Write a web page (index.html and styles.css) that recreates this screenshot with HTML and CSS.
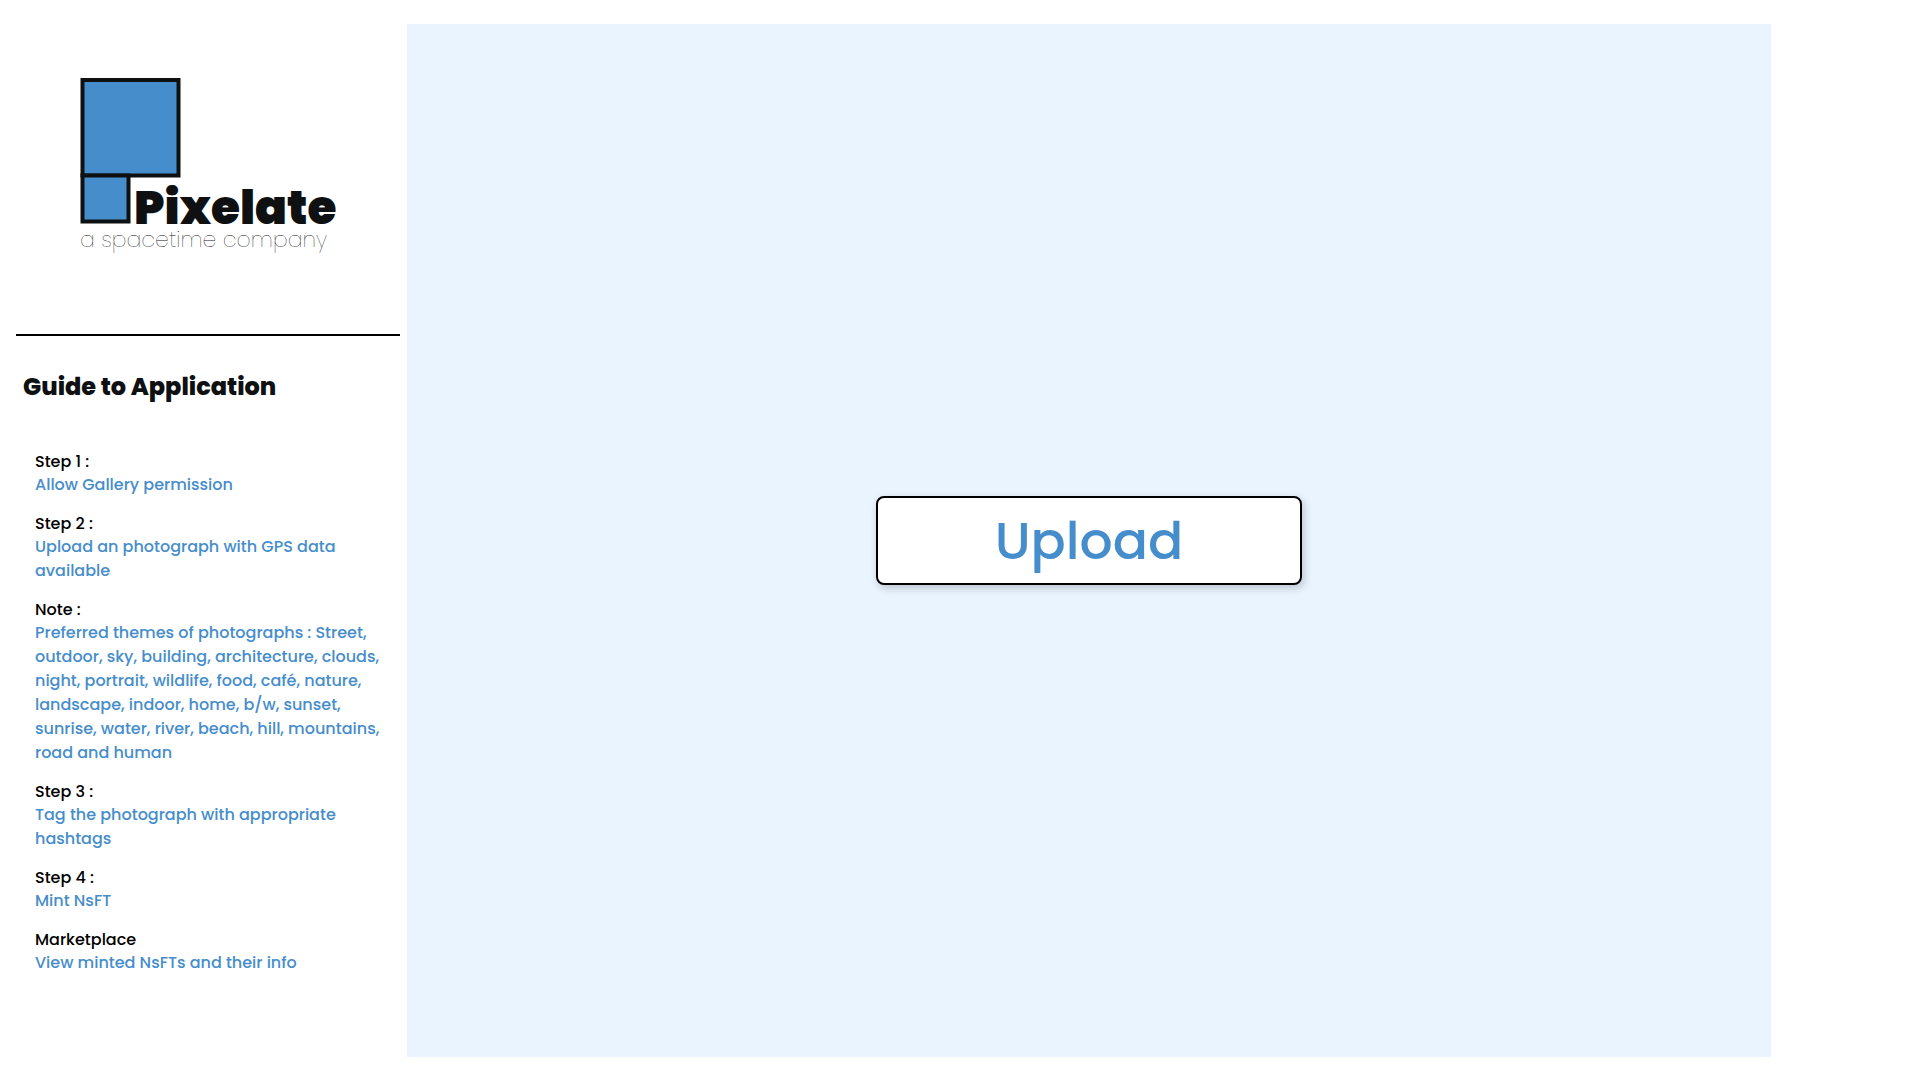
FILE: index.html
```
<!DOCTYPE html>
<html lang="en">
<head>
<meta charset="utf-8">
<meta name="viewport" content="width=device-width, initial-scale=1">
<title>Pixelate</title>
<link rel="stylesheet" href="styles.css">
</head>
<body>
<div class="app">
  <aside class="sidebar">
    <header class="brand">
      <svg class="logo" width="264" height="190" viewBox="0 0 264 190" role="img" aria-label="Pixelate, a spacetime company">
        <g class="logo-squares">
          <rect x="2.500" y="3" width="96" height="95.500"/>
          <rect x="2.500" y="98.500" width="46" height="46"/>
        </g>
        <text class="logo-name" x="54" y="147">Pixelate</text>
        <text class="logo-tag" x="0" y="170">a spacetime company</text>
      </svg>
    </header>
    <section class="guide">
      <h1 class="guide-title">Guide to Application</h1>
      <dl class="steps">
        <div><dt>Step 1 :</dt><dd>Allow Gallery permission</dd></div>
        <div><dt>Step 2 :</dt><dd>Upload an photograph with GPS data available</dd></div>
        <div><dt>Note :</dt><dd>Preferred themes of photographs : Street, outdoor, sky, building, architecture, clouds, night, portrait, wildlife, food, café, nature, landscape, indoor, home, b/w, sunset, sunrise, water, river, beach, hill, mountains, road and human</dd></div>
        <div><dt>Step 3 :</dt><dd>Tag the photograph with appropriate hashtags</dd></div>
        <div><dt>Step 4 :</dt><dd>Mint NsFT</dd></div>
        <div><dt>Marketplace</dt><dd>View minted NsFTs and their info</dd></div>
      </dl>
    </section>
  </aside>
  <main class="workspace">
    <button class="upload" type="button">Upload</button>
  </main>
</div>
</body>
</html>
```
FILE: styles.css
```
* { box-sizing: border-box; }

body {
  margin: 0;
  background: #fff;
  color: #0e1012;
  font-family: Poppins, Inter, sans-serif;
}

.app {
  display: flex;
  min-height: 100vh;
  padding: 24px 149px 23px 0;
}

.sidebar {
  flex: none;
  width: 407px;
  padding: 0 7px 0 16px;
}

.brand {
  height: 312px;
  padding: 53px 0 0 64px;
  border-bottom: 2px solid #000;
}

.logo {
  display: block;
  overflow: visible;
}

.logo-squares {
  fill: #468dcb;
  stroke: #0e1012;
  stroke-width: 4;
}

.logo-name {
  font-size: 47px;
  font-weight: 900;
  fill: #0e1012;
}

.logo-tag {
  font-size: 22px;
  font-weight: 200;
  fill: #0e1012;
}

.guide { padding: 33px 7px 0; }

.guide-title {
  margin: 0;
  font-size: 24px;
  line-height: 36px;
  font-weight: 800;
}

.steps {
  display: flex;
  flex-direction: column;
  gap: 16px;
  margin: 0;
  padding: 46px 0 0 12px;
  font-size: 16px;
  font-weight: 500;
}

.steps dt {
  line-height: 22px;
  color: #000;
}

.steps dd {
  margin: 0;
  line-height: 24px;
  color: #468dcb;
}

.workspace {
  display: flex;
  flex: 1;
  align-items: center;
  justify-content: center;
  background: #e9f4ff;
}

.upload {
  width: 426px;
  max-width: 90%;
  padding: 4px 16px 3px;
  border: 2px solid #000;
  border-radius: 8px;
  background: #fff;
  box-shadow: 2px 3px 8px rgba(0, 0, 0, 0.2);
  color: #468dcb;
  font-family: inherit;
  font-size: 52px;
  line-height: 78px;
  font-weight: 500;
  cursor: pointer;
}
```
